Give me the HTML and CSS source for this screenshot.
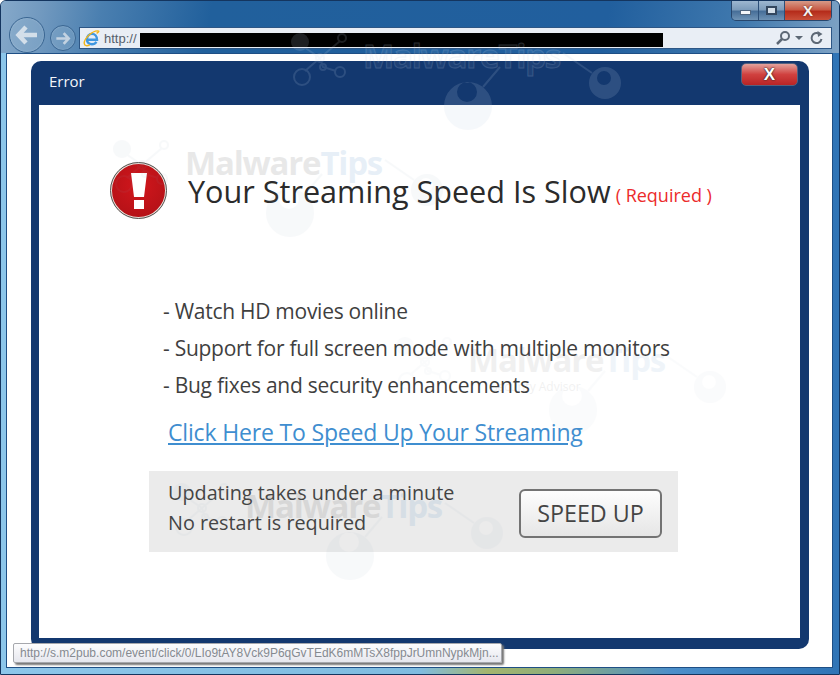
FILE: index.html
```html
<!DOCTYPE html>
<html lang="en">
<head>
  <meta charset="UTF-8">
  <title>Error</title>
  <link rel="stylesheet" href="styles.css">
</head>
<body>

  <svg class="defs" width="0" height="0">
    <symbol id="molecule" viewBox="0 0 340 110">
      <g fill="none" stroke="currentColor" stroke-width="2">
        <path d="M14 14 L30 25 L50 8 M30 25 L15 38 M30 25 L33 34 L46 38"/>
        <path d="M193 54 L210 34 M273 20 L302 40"/>
        <circle cx="52" cy="5" r="4"/>
        <circle cx="30" cy="25" r="4"/>
        <circle cx="12" cy="44" r="8"/>
        <circle cx="33" cy="34" r="3"/>
        <circle cx="50" cy="39" r="5"/>
      </g>
      <circle cx="10" cy="9" r="9" fill="currentColor"/>
      <path fill="currentColor" fill-rule="evenodd" d="M154 73a24 24 0 1 0 48 0a24 24 0 1 0 -48 0 M167 59a10 10 0 1 0 20 0a10 10 0 1 0 -20 0"/>
      <path fill="currentColor" fill-rule="evenodd" d="M299 50a16 16 0 1 0 32 0a16 16 0 1 0 -32 0 M307 45a7 7 0 1 0 14 0a7 7 0 1 0 -14 0"/>
    </symbol>
  </svg>

  <div class="window">
    <div class="chrome">
      <div class="caption">
        <div class="caption-btns">
          <span class="cap-btn cap-min"><i></i></span>
          <span class="cap-btn cap-max"><i></i></span>
          <span class="cap-btn cap-close">X</span>
        </div>
      </div>

      <div class="toolbar">
        <span class="nav nav-back">
          <svg width="24" height="22" viewBox="0 0 24 22"><path d="M11 3 L3.5 11 L11 19 M4 11 H22" fill="none" stroke="#d3dfea" stroke-width="4.5"/></svg>
        </span>
        <span class="nav nav-fwd">
          <svg width="16" height="15" viewBox="0 0 24 22"><path d="M13 3 L20.5 11 L13 19 M20 11 H2" fill="none" stroke="#c3d2e1" stroke-width="4"/></svg>
        </span>
        <div class="address">
          <svg class="ie-icon" width="17" height="17" viewBox="0 0 20 20">
            <path d="M4.6 11.5 H16.5 C16.5 7.5 14 4.5 10.5 4.5 C7 4.5 4.6 7.5 4.6 11 C4.6 14.5 7 16.8 10.5 16.8 C12.5 16.8 14.5 16 15.8 14" fill="none" stroke="#3f97e0" stroke-width="2.8"/>
            <path d="M16 4 C19 2 19.5 1 17 1 C11 1 1 10 1.5 16 C1.8 19 5 19 8 17.5" fill="none" stroke="#f2b61b" stroke-width="1.6"/>
          </svg>
          <span class="url">http://</span>
          <span class="redacted"></span>
          <span class="addr-tools">
            <svg width="16" height="16" viewBox="0 0 16 16"><circle cx="10" cy="6" r="4" fill="none" stroke="#5d6875" stroke-width="2"/><path d="M7 9 L2 14" stroke="#5d6875" stroke-width="2.5"/></svg>
            <i class="caret"></i>
            <svg width="14" height="14" viewBox="0 0 14 14"><path d="M11.5 8 A5 5 0 1 1 9 2.6" fill="none" stroke="#5d6875" stroke-width="2"/><path d="M7.5 0 L12.5 3 L8 6 Z" fill="#5d6875"/></svg>
          </span>
        </div>
      </div>
    </div>

    <div class="page">
      <div class="dialog">
        <div class="dialog-head">
          <span class="dialog-title">Error</span>
          <span class="dialog-close">X</span>
        </div>
        <div class="dialog-body">
          <div class="headline">
            <span class="alert-icon">
              <svg width="16" height="36" viewBox="0 0 16 36"><path d="M0 0 H16 L13 24 H3 Z M3 27 H13 V36 H3 Z" fill="#fff"/></svg>
            </span>
            <h1>Your Streaming Speed Is Slow</h1>
            <span class="required">( Required )</span>
          </div>

          <ul class="features">
            <li>- Watch HD movies online</li>
            <li>- Support for full screen mode with multiple monitors</li>
            <li>- Bug fixes and security enhancements</li>
          </ul>

          <a class="speed-link" href="#">Click Here To Speed Up Your Streaming</a>

          <div class="update-box">
            <p>Updating takes under a minute<br>No restart is required</p>
            <span class="speed-btn">SPEED UP</span>
          </div>
        </div>
      </div>
    </div>

    <!-- watermarks sit on top of the shot -->
    <div class="wm wm-top"><svg width="340" height="110"><use href="#molecule"/></svg><span>Malware<em>Tips</em></span></div>
    <div class="wm wm-head"><svg width="340" height="110"><use href="#molecule"/></svg><span>Malware<em>Tips</em></span></div>
    <div class="wm wm-mid"><svg width="340" height="110"><use href="#molecule"/></svg><span>Malware<em>Tips</em></span><small>Security Advisor</small></div>
    <div class="wm wm-box"><svg width="340" height="110"><use href="#molecule"/></svg><span>Malware<em>Tips</em></span></div>

    <div class="status-tip">http://s.m2pub.com/event/click/0/LIo9tAY8Vck9P6qGvTEdK6mMTsX8fppJrUmnNypkMjn...</div>
  </div>

</body>
</html>
```

FILE: styles.css
```css
* {
  box-sizing: border-box;
}

body {
  margin: 0;
  font-family: "Open Sans", sans-serif;
  color: #333;
}

.defs {
  position: absolute;
}

.window {
  position: relative;
  width: 840px;
  height: 675px;
  overflow: hidden;
  display: flex;
  flex-direction: column;
  background: linear-gradient(90deg, #8cc6ea 0, #7fbce0 50%, #a3b56e 58%, #8fae7a 66%, #4c8fca 80%, #2f74b6 100%);
  border: 1px solid #14355f;
  border-radius: 6px 6px 0 0;
}

.chrome {
  flex: none;
  height: 52px;
  background: linear-gradient(100deg, #86a9ca 0, #7199bf 5%, #4a7fb0 12%, #21609c 25%, #215f9e 72%, #4079ae 88%, #7fa3c5 100%);
}

.caption {
  height: 20px;
  display: flex;
  justify-content: flex-end;
  padding-right: 7px;
}

.caption-btns {
  display: flex;
  height: 20px;
  border: 1px solid #27466d;
  border-top: 0;
  border-radius: 0 0 5px 5px;
  overflow: hidden;
}

.cap-btn {
  display: flex;
  align-items: center;
  justify-content: center;
  height: 100%;
  border-right: 1px solid #2c4f78;
  background: linear-gradient(#9db7d0, #7d9cbb 45%, #476f99 55%, #6f93b5);
}

.cap-min {
  width: 27px;
}

.cap-min i {
  width: 11px;
  height: 5px;
  margin-top: 4px;
  background: #f4f6f9;
  border: 1px solid #50667f;
}

.cap-max {
  width: 26px;
}

.cap-max i {
  width: 11px;
  height: 9px;
  border: 2px solid #33475f;
  background: #d5dfe9;
}

.cap-close {
  width: 46px;
  border-right: 0;
  color: #f7f3f0;
  font-family: "Liberation Sans", sans-serif;
  font-size: 15px;
  font-weight: 700;
  text-shadow: 0 0 2px #5a2018;
  background: linear-gradient(#d69a88, #c85b46 45%, #b52c1b 55%, #c9503a);
}

.toolbar {
  height: 32px;
  display: flex;
  align-items: flex-end;
  padding: 0 7px 4px 8px;
}

.nav {
  flex: none;
  display: flex;
  align-items: center;
  justify-content: center;
  border-radius: 50%;
  border: 1px solid #3a6692;
  background: rgba(160, 190, 215, 0.25);
  box-shadow: inset 0 0 2px rgba(255, 255, 255, 0.3);
}

.nav-back {
  width: 36px;
  height: 36px;
  margin-bottom: -4px;
}

.nav-fwd {
  width: 26px;
  height: 26px;
  margin: 0 3px -2px 5px;
}

.address {
  flex: 1;
  height: 22px;
  display: flex;
  align-items: center;
  padding-left: 3px;
  background: #e9eef5;
  border: 1px solid #2d5685;
  color: #56606c;
}

.ie-icon {
  flex: none;
}

.url {
  margin-left: 4px;
  font-family: "Liberation Sans", sans-serif;
  font-size: 13px;
}

.redacted {
  flex: none;
  width: 523px;
  height: 14px;
  margin: 4px 0 0 3px;
  background: #000;
}

.addr-tools {
  margin-left: auto;
  margin-right: 7px;
  display: flex;
  align-items: center;
  gap: 4px;
}

.caret {
  width: 0;
  height: 0;
  border: 4px solid transparent;
  border-top: 4px solid #5d6875;
  border-bottom: 0;
  margin-right: 3px;
}

.page {
  flex: 1;
  min-height: 0;
  margin: 0 6px 6px 5px;
  background: #fff;
  border: 1px solid #1f4f85;
  padding: 7px 23px 0 24px;
}

.dialog {
  position: relative;
  height: 588px;
  display: flex;
  flex-direction: column;
  background: #13386f;
  border-radius: 10px;
  padding: 0 9px 11px 8px;
}

.dialog-head {
  height: 44px;
  display: flex;
  justify-content: space-between;
  padding-left: 10px;
  flex: none;
}

.dialog-title {
  margin-top: 10px;
  font-size: 15px;
  color: #f2f5f9;
}

.dialog-close {
  width: 57px;
  height: 23px;
  margin: 2px 2px 0 0;
  display: flex;
  align-items: center;
  justify-content: center;
  color: #fff;
  font-family: "Liberation Sans", sans-serif;
  font-size: 17px;
  font-weight: 700;
  border: 1px solid #55617e;
  border-radius: 5px;
  background: linear-gradient(#e3a29c, #d0413f 50%, #b92425);
  text-shadow: 0 0 2px #222, 0 0 1px #222;
}

.dialog-body {
  flex: 1;
  background: #fff;
  padding: 57px 0 0 71px;
}

.headline {
  display: flex;
  align-items: center;
}

.alert-icon {
  width: 57px;
  height: 57px;
  flex: none;
  display: flex;
  align-items: center;
  justify-content: center;
  border-radius: 50%;
  border: 2px solid #e9ddd6;
  outline: 1px solid #555;
  outline-offset: -1px;
  background: radial-gradient(circle at 50% 40%, #d2161c, #ad1116);
  margin-right: 21px;
}

h1 {
  margin: 0;
  font-size: 30.6px;
  font-weight: 400;
  color: #2b2b2b;
  white-space: nowrap;
}

.required {
  margin: 8px 0 0 5px;
  font-size: 18px;
  color: #ec2b2b;
  white-space: nowrap;
}

.features {
  list-style: none;
  margin: 74px 0 0 53px;
  padding: 0;
  font-size: 21px;
  letter-spacing: -0.27px;
  line-height: 37px;
  color: #3f3f3f;
}

.speed-link {
  display: block;
  margin: 12px 0 0 58px;
  font-size: 23px;
  letter-spacing: -0.17px;
  color: #3f8ed0;
}

.update-box {
  width: 529px;
  height: 81px;
  margin: 23px 0 0 39px;
  padding: 0 16px 0 19px;
  display: flex;
  align-items: center;
  justify-content: space-between;
  background: #ebebeb;
}

.update-box p {
  margin: -8px 0 0;
  font-size: 19.8px;
  line-height: 30px;
  color: #444;
}

.speed-btn {
  width: 143px;
  height: 49px;
  margin-top: 3px;
  display: flex;
  align-items: center;
  justify-content: center;
  font-size: 23.3px;
  color: #444;
  border: 2px solid #737373;
  border-radius: 6px;
  background: linear-gradient(#fdfdfd, #e6e6e6);
}

.wm {
  position: absolute;
  width: 340px;
  height: 110px;
  pointer-events: none;
  color: #8fa5bd;
  opacity: 0.14;
}

.wm svg {
  display: block;
  opacity: 0.45;
}

.wm span {
  position: absolute;
  left: 73px;
  top: 0;
  font-size: 33px;
  font-weight: 700;
  letter-spacing: -1.2px;
  line-height: 46px;
  white-space: nowrap;
  color: #666;
}

.wm em {
  font-style: normal;
  color: #5b94c8;
}

.wm small {
  position: absolute;
  left: 96px;
  top: 41px;
  font-size: 12px;
  color: #666;
}

.wm-top {
  left: 289px;
  top: 32px;
  opacity: 0.2;
  color: #c3d2e6;
}

.wm-top svg {
  opacity: 0.75;
}

.wm-top span,
.wm-top em {
  color: rgba(255, 255, 255, 0.25);
  -webkit-text-stroke: 1px #c3d2e6;
}

.wm-head {
  left: 111px;
  top: 139px;
}

.wm-mid {
  left: 394px;
  top: 336px;
  opacity: 0.09;
}

.wm-box {
  left: 171px;
  top: 482px;
}

.status-tip {
  position: absolute;
  left: 12px;
  top: 642px;
  width: 489px;
  height: 20px;
  padding: 0 0 0 6px;
  font-family: "Liberation Sans", sans-serif;
  font-size: 12px;
  line-height: 19px;
  color: #858a90;
  white-space: nowrap;
  overflow: hidden;
  background: linear-gradient(#fdfdfe, #e6e7ee);
  border: 1px solid #a6a8ad;
  border-radius: 2px;
  box-shadow: 2px 2px 2px #777;
}
```
